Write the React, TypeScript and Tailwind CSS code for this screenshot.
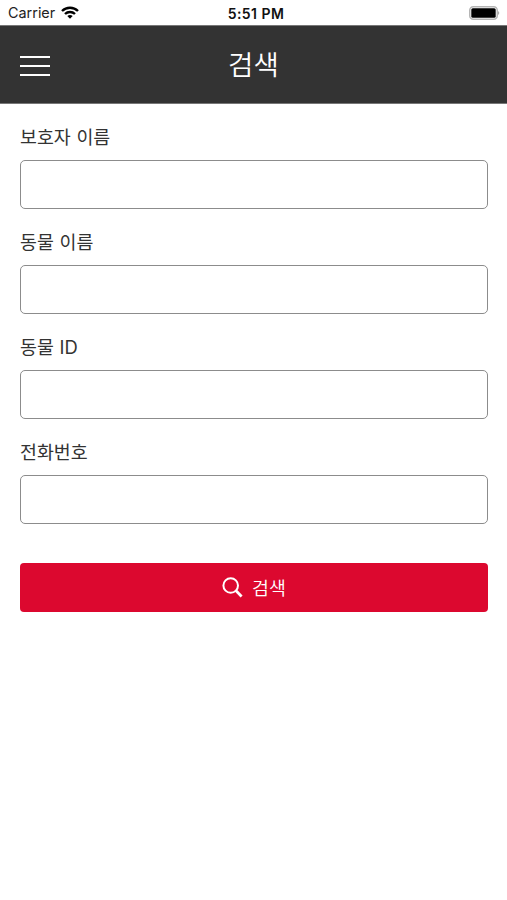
const labels = ["보호자 이름", "동물 이름", "동물 ID", "전화번호"];

function StatusBar() {
  return (
    <div className="grid h-[25px] grid-cols-3 items-center pr-[7px] pl-2 pt-[2px] text-[14.4px] leading-none text-[#222] font-['Inter',sans-serif]">
      <div className="flex items-center gap-[6px]">
        <span>Carrier</span>
        <svg width="18" height="13" viewBox="0 0 18 13" fill="none" stroke="#000" strokeWidth="2.4" className="mb-[2px]">
          <path d="M1 5C5.5.6 12.5.6 17 5" />
          <path d="M4 8c2.8-2.7 7.2-2.7 10 0" />
          <path d="M9 12.8L6.3 10q2.7-2.2 5.4 0z" fill="#000" stroke="none" />
        </svg>
      </div>
      <span className="pl-[4px] text-center text-[14px] tracking-[0.45px] font-semibold text-[#111] whitespace-nowrap">5:51 PM</span>
      <svg className="mb-[2px] justify-self-end" width="31" height="14" viewBox="0 0 31 14">
        <rect x=".75" y=".75" width="27.5" height="12.5" rx="3.5" fill="none" stroke="#b5b5b5" strokeWidth="1.5" />
        <rect x="2.3" y="2.3" width="24.4" height="9.4" rx="1.5" />
        <path d="M29.3 5q1.8 2 0 4z" fill="#888" />
      </svg>
    </div>
  );
}

export default function App() {
  return (
    <main className="min-h-[900px] w-full bg-white font-['Noto_Sans_CJK_KR',sans-serif] text-[#333]">
      <StatusBar />
      <header className="grid h-[79px] grid-cols-[30px_1fr_30px] items-center border-y border-[#777] bg-[#333] px-5 text-white">
        <button type="button" aria-label="메뉴" className="flex flex-col gap-[7px] pt-[2px]">
          <span className="h-[2px] w-[30px] bg-white" />
          <span className="h-[2px] w-[30px] bg-white" />
          <span className="h-[2px] w-[30px] bg-white" />
        </button>
        <h1 className="pb-[2px] text-center text-[27.6px] leading-none font-[350]">검색</h1>
      </header>
      <form className="pr-[19px] pl-5 pt-5">
        {labels.map((label) => (
          <label key={label} className="block h-[105px]">
            <span className="block h-[36px] text-[18.4px] leading-[26px] font-normal [word-spacing:0.5px] font-['Inter','Noto_Sans_CJK_KR',sans-serif]">{label}</span>
            <input className="block h-[49px] w-full rounded-[5px] border border-[#8c8c8c] px-3 outline-none" />
          </label>
        ))}
        <button type="button" className="mt-[19px] flex h-[49px] w-full items-center justify-center gap-[9px] rounded-[4px] bg-[#dc082f] text-[18.4px] leading-none font-[350] text-white">
          <svg width="21" height="21" viewBox="0 0 21 21" fill="none" stroke="currentColor" strokeWidth="2">
            <circle cx="8.7" cy="8.5" r="7.3" />
            <path d="M13.8 13.6l5.8 5.8" strokeWidth="2.8" />
          </svg>
          <span className="pb-[1px]">검색</span>
        </button>
      </form>
    </main>
  );
}
